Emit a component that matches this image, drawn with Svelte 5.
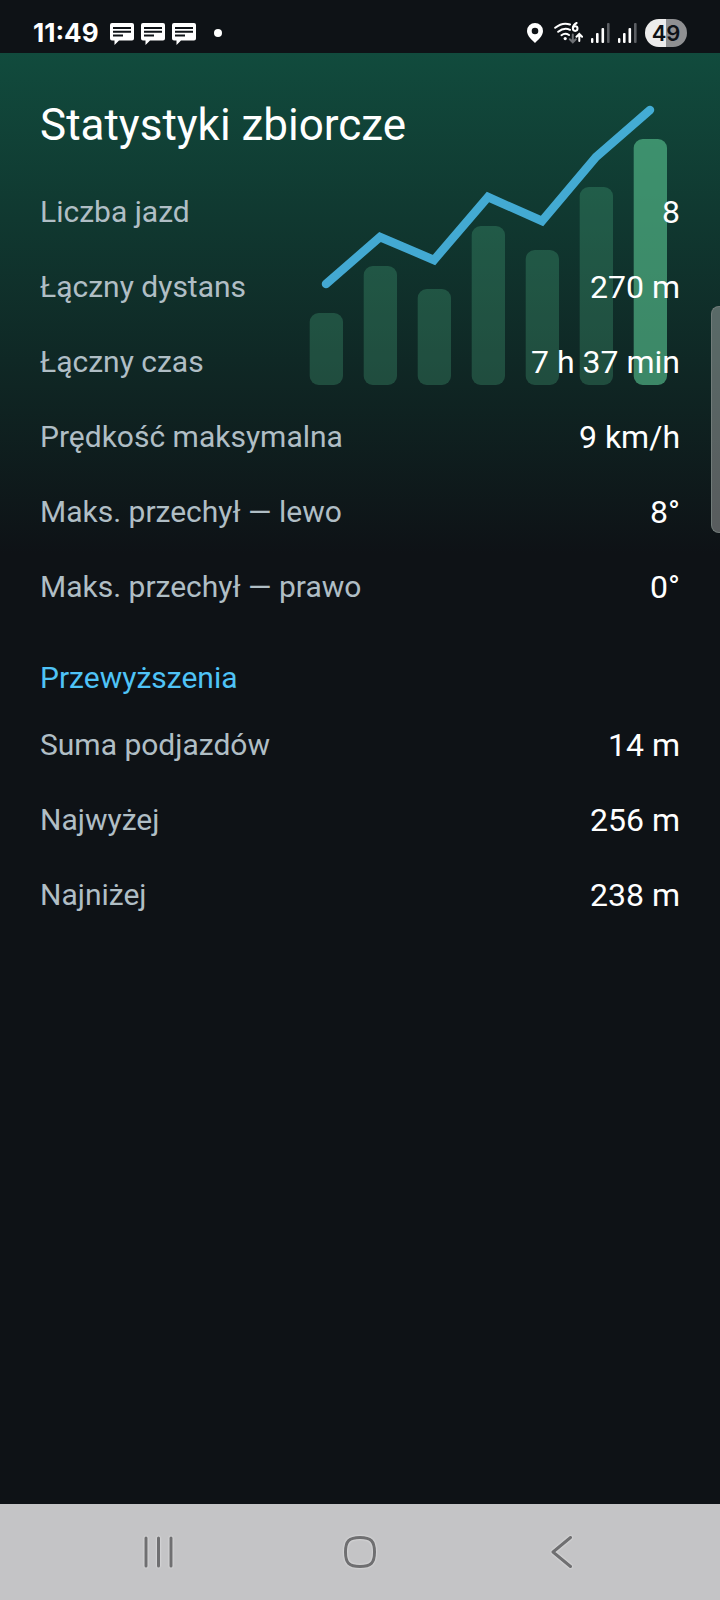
<script>
  let rideStats = [
    { label: "Liczba jazd", value: "8" },
    { label: "Łączny dystans", value: "270 m" },
    { label: "Łączny czas", value: "7 h 37 min" },
    { label: "Prędkość maksymalna", value: "9 km/h" },
    { label: "Maks. przechył — lewo", value: "8°" },
    { label: "Maks. przechył — prawo", value: "0°" }
  ];

  let elevationStats = [
    { label: "Suma podjazdów", value: "14 m" },
    { label: "Najwyżej", value: "256 m" },
    { label: "Najniżej", value: "238 m" }
  ];

  let notifications = [1, 2, 3];

  // Decorative chart in the header
  const barHeights = [72, 119, 96, 159, 135, 198, 246];
  const barStep = 54;
  const linePoints = "22,180 76,133 130,156 184,93 238,117 292,53 346,6";
</script>

{#snippet signal()}
  <svg class="signal" viewBox="0 0 19 20" aria-hidden="true">
    <rect x="0" y="15" width="2.4" height="5" rx="1" />
    <rect x="5" y="10" width="2.6" height="10" rx="1" />
    <rect x="10.5" y="5" width="2.6" height="15" rx="1" />
    <rect class="weak" x="16" y="0" width="2.6" height="20" rx="1" />
  </svg>
{/snippet}

{#snippet statList(stats)}
  <dl>
    {#each stats as stat}
      <div class="row">
        <dt>{stat.label}</dt>
        <dd>{stat.value}</dd>
      </div>
    {/each}
  </dl>
{/snippet}

<div class="screen">
  <header class="status">
    <time>11:49</time>
    <div class="messages">
      {#each notifications as n (n)}
        <svg class="message" viewBox="0 0 24 22" aria-hidden="true">
          <path class="bubble" d="M2 0H22Q24 0 24 2V15.5Q24 17.5 22 17.5H9L4.500 22V17.5H2Q0 17.5 0 15.5V2Q0 0 2 0Z" />
          <path class="lines" d="M3 5H21M3 8.800H21M3 12.600H13" />
        </svg>
      {/each}
    </div>
    <span class="dot"></span>

    <div class="indicators">
      <svg class="pin" viewBox="0 0 16 20" aria-hidden="true">
        <path fill-rule="evenodd" d="M8 0A8 8 0 0 0 0 8C0 13 5 17 8 20C11 17 16 13 16 8A8 8 0 0 0 8 0ZM8 4.700A3.300 3.300 0 1 1 8 11.300A3.300 3.300 0 1 1 8 4.700Z" />
      </svg>
      <svg class="wifi" viewBox="0 0 29 22" aria-hidden="true">
        <path class="wave" d="M1.200 5.800Q8.500 -.2 16 2.500M4.200 9.800Q10 5 16 7.800M7.500 13.200Q11 10.500 15 13" />
        <circle cx="11.200" cy="16.600" r="1.600" />
        <path class="six" d="M22.600 1Q19.500 2.500 18.800 6" />
        <circle class="six" cx="21.200" cy="6.600" r="2.300" />
        <path class="down" d="M18.800 12.500V20M15.800 17.300L18.800 20.300L21.800 17.300" />
        <path class="up" d="M25.300 19V12M22.500 14.800L25.300 12L28.100 14.800" />
      </svg>
      {@render signal()}
      {@render signal()}
      <span class="battery">49</span>
    </div>
  </header>

  <main>
    <svg class="chart" viewBox="0 0 368 281" aria-hidden="true">
      {#each barHeights as height, i}
        <rect
          class="bar"
          class:last={i === barHeights.length - 1}
          x={5.7 + i * barStep}
          y={281 - height}
          width="33.3"
          {height}
          rx="9"
        />
      {/each}
      <polyline points={linePoints} />
    </svg>

    <div class="content">
      <h1>Statystyki zbiorcze</h1>
      {@render statList(rideStats)}
      <h2>Przewyższenia</h2>
      {@render statList(elevationStats)}
    </div>

    <div class="edge-panel"></div>
  </main>

  <nav>
    <button aria-label="Ostatnie">
      <svg viewBox="0 0 34 34" aria-hidden="true">
        <path d="M4 3V31M16.500 3V31M29 3V31" />
      </svg>
    </button>
    <button aria-label="Ekran główny">
      <svg viewBox="0 0 34 34" aria-hidden="true">
        <path d="M17 2.500C28 2.500 31.500 6 31.500 17S28 31.500 17 31.500S2.500 28 2.500 17S6 2.500 17 2.500Z" />
      </svg>
    </button>
    <button aria-label="Wstecz">
      <svg viewBox="0 0 34 34" aria-hidden="true">
        <path d="M26.500 2.500L9 17L26.500 31.500" />
      </svg>
    </button>
  </nav>
</div>

<style>
  :global(body) {
    margin: 0;
    background: #0e1216;
  }

  .screen {
    display: flex;
    flex-direction: column;
    min-height: 100vh;
    font-family: Roboto, sans-serif;
    color: #fff;
    background: #0e1216;
  }

  .status {
    display: flex;
    align-items: center;
    box-sizing: border-box;
    height: 53px;
    padding: 13px 33px 0;
  }

  time {
    font-family: Inter, sans-serif;
    font-size: 26px;
    font-weight: 700;
    line-height: 26px;
  }

  .messages {
    display: flex;
    gap: 7px;
    margin: 2px 0 0 11px;
  }

  .message {
    width: 24px;
    height: 22px;
  }

  .bubble {
    fill: #fff;
  }

  .lines {
    stroke: #0e1216;
    stroke-width: 2;
  }

  .dot {
    width: 8px;
    height: 8px;
    margin-left: 18px;
    border-radius: 50%;
    background: #fff;
  }

  .indicators {
    display: flex;
    align-items: center;
    gap: 8px;
    margin-left: auto;
  }

  .indicators svg {
    fill: #fff;
  }

  .pin {
    width: 16px;
    height: 20px;
    margin-right: 3px;
  }

  .wifi {
    width: 29px;
    height: 22px;
  }

  .wifi path,
  .wifi .six {
    fill: none;
    stroke: #fff;
    stroke-width: 2;
    stroke-linecap: round;
  }

  .wifi .down {
    stroke: #6d7074;
  }

  .signal {
    width: 19px;
    height: 20px;
  }

  .signal .weak {
    fill: #5c5f64;
  }

  .battery {
    width: 42px;
    border-radius: 14px;
    background: linear-gradient(90deg, #ececec 50%, #8f9092 50%);
    color: #0e1216;
    font-family: Inter, sans-serif;
    font-size: 22px;
    font-weight: 600;
    line-height: 28px;
    text-align: center;
  }

  main {
    position: relative;
    flex: 1;
    background: linear-gradient(#114b3d, #0e1216 500px);
  }

  .chart {
    position: absolute;
    top: 51px;
    right: 48px;
    width: 368px;
    height: 281px;
  }

  .bar {
    fill: #52b788;
    opacity: 0.27;
  }

  .bar.last {
    opacity: 0.68;
  }

  polyline {
    fill: none;
    stroke: #4fc3f7;
    stroke-width: 8.5;
    stroke-linecap: round;
    opacity: 0.82;
  }

  .content {
    position: relative;
    padding: 44px 40px;
  }

  h1 {
    margin: 0 0 21px;
    font-size: 44px;
    font-weight: 400;
    line-height: 56px;
  }

  h2 {
    margin: 36px 0 11px;
    color: #4fc3f7;
    font-size: 30px;
    font-weight: 400;
    line-height: 36px;
  }

  dl {
    margin: 0;
  }

  .row {
    display: flex;
    align-items: center;
    justify-content: space-between;
    height: 75px;
  }

  dt {
    color: #b0bec5;
    font-size: 30px;
  }

  dd {
    margin: 0;
    font-size: 32px;
  }

  /* One UI edge panel handle */
  .edge-panel {
    position: absolute;
    top: 253px;
    right: 0;
    box-sizing: border-box;
    width: 9px;
    height: 227px;
    border: 1px solid #717b79;
    border-right: 0;
    border-radius: 8px 0 0 8px;
    background: rgba(180, 180, 180, 0.45);
  }

  nav {
    display: flex;
    box-sizing: border-box;
    height: 96px;
    padding: 0 58px;
    background: #c4c4c6;
  }

  nav button {
    display: flex;
    flex: 1;
    align-items: center;
    justify-content: center;
    border: 0;
    background: none;
  }

  nav svg {
    width: 34px;
    height: 34px;
    fill: none;
    stroke: #6f6f71;
    stroke-width: 3;
    stroke-linecap: round;
    stroke-linejoin: round;
    filter: drop-shadow(0 0 1px #eee);
  }
</style>
